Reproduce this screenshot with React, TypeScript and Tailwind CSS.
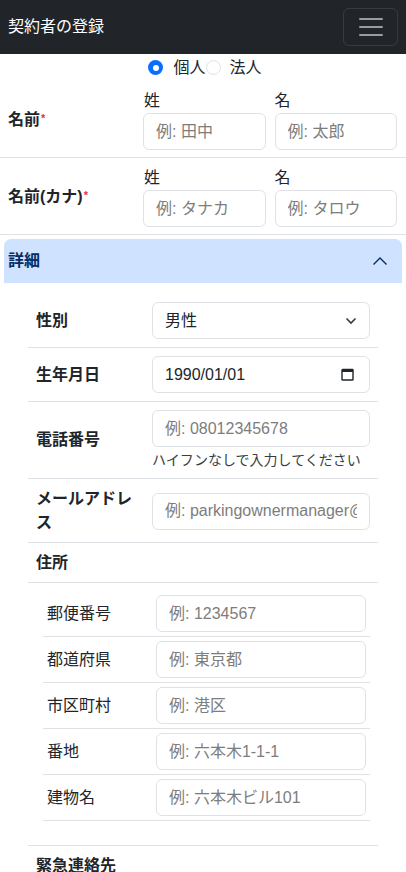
import React from 'react';

const inputCls =
  'h-[37px] w-full min-w-0 rounded-[6px] border border-[#dee2e6] bg-white px-3 text-[16px] leading-[24px] text-[#212529] outline-none placeholder:text-[#7d7d7d]';

function Navbar() {
  return (
    <nav className="flex h-[54px] items-center justify-between bg-[#212529] pl-2 pr-2">
      <span className="text-[16px] leading-[24px] text-white">契約者の登録</span>
      <button className="flex h-[38px] w-[55px] items-center justify-center rounded-[6px] border border-white/10">
        <svg width="30" height="30" viewBox="0 0 30 30" fill="none">
          <path
            d="M4 7h22M4 15h22M4 23h22"
            stroke="rgba(255,255,255,0.55)"
            strokeWidth="2"
            strokeLinecap="round"
            strokeMiterlimit="10"
          />
        </svg>
      </button>
    </nav>
  );
}

function Radio({ checked }: { checked?: boolean }) {
  return checked ? (
    <span className="flex h-[15px] w-[15px] items-center justify-center rounded-full bg-[#0d6efd]">
      <span className="h-[6px] w-[6px] rounded-full bg-white" />
    </span>
  ) : (
    <span className="h-[15px] w-[15px] rounded-full border border-[#dee2e6] bg-white" />
  );
}

function NameRow({
  label,
  first,
  last,
}: {
  label: string;
  first: string;
  last: string;
}) {
  return (
    <div className="grid grid-cols-[127px_1fr] items-center gap-x-2 border-b border-[#dee2e6] pb-[7px] pl-2 pr-[9px] pt-2">
      <div className="text-[16px] font-bold leading-[24px]">
        {label}
        <span className="ml-[1px] align-top text-[11px] leading-[20px] text-[#dc3545]">*</span>
      </div>
      <div className="grid grid-cols-2 gap-x-[9px]">
        <div>
          <div className="pl-[1px] text-[16px] leading-[24px]">姓</div>
          <input className={inputCls} placeholder={first} />
        </div>
        <div>
          <div className="text-[16px] leading-[24px]">名</div>
          <input className={inputCls} placeholder={last} />
        </div>
      </div>
    </div>
  );
}

function DetailRow({
  label,
  tight,
  children,
}: {
  label: string;
  tight?: boolean;
  children: React.ReactNode;
}) {
  return (
    <div
      className={`grid grid-cols-[104px_1fr] items-center gap-x-3 border-b border-[#dee2e6] px-2 pt-2 ${
        tight ? 'pb-[7px]' : 'pb-2'
      }`}
    >
      <div className="text-[16px] font-bold leading-[24px]">{label}</div>
      <div className="min-w-0">{children}</div>
    </div>
  );
}

function AddressRow({ label, placeholder }: { label: string; placeholder: string }) {
  return (
    <div className="grid grid-cols-[109px_1fr] items-center border-b border-[#dee2e6] py-1 pl-1 pr-1">
      <div className="text-[16px] leading-[24px]">{label}</div>
      <input className={inputCls} placeholder={placeholder} />
    </div>
  );
}

export default function App() {
  const address = [
    { label: '郵便番号', placeholder: '例: 1234567' },
    { label: '都道府県', placeholder: '例: 東京都' },
    { label: '市区町村', placeholder: '例: 港区' },
    { label: '番地', placeholder: '例: 六本木1-1-1' },
    { label: '建物名', placeholder: '例: 六本木ビル101' },
  ];

  return (
    <div className="min-h-screen bg-white font-['Liberation_Sans','Noto_Sans_CJK_JP',sans-serif] text-[#212529]">
      <Navbar />

      {/* 個人 / 法人 */}
      <div className="flex h-[27px] items-center justify-center pl-[4px]">
        <Radio checked />
        <span className="ml-[10px] text-[16px] leading-[24px]">個人</span>
        <Radio />
        <span className="ml-[9px] text-[16px] leading-[24px]">法人</span>
      </div>

      <NameRow label="名前" first="例: 田中" last="例: 太郎" />
      <NameRow label="名前(カナ)" first="例: タナカ" last="例: タロウ" />

      {/* Accordion */}
      <div className="mx-1 mt-1">
        <div className="flex h-[44px] items-center justify-between rounded-t-[7px] bg-[#cfe2ff] pl-1 pr-[14px]">
          <span className="text-[16px] font-bold leading-[24px] text-[#052c65]">詳細</span>
          <svg width="16" height="16" viewBox="0 0 16 16" fill="none">
            <path d="M1.5 11.5 8 5l6.5 6.5" stroke="#052c65" strokeWidth="1.4" />
          </svg>
        </div>

        <div className="px-6 pt-[11px]">
          <DetailRow label="性別">
            <div className="relative">
              <select className={`${inputCls} appearance-none pr-9`} defaultValue="male">
                <option value="male">男性</option>
                <option value="female">女性</option>
              </select>
              <svg
                className="pointer-events-none absolute right-[13px] top-[15px]"
                width="12"
                height="8"
                viewBox="0 0 12 8"
                fill="none"
              >
                <path d="M1.5 1.5 6 6l4.5-4.5" stroke="#343a40" strokeWidth="1.6" />
              </svg>
            </div>
          </DetailRow>

          <DetailRow label="生年月日">
            <div className="relative">
              <input className={inputCls} defaultValue="1990/01/01" readOnly />
              <svg
                className="pointer-events-none absolute right-[16px] top-[12px]"
                width="13"
                height="13"
                viewBox="0 0 13 13"
                fill="none"
              >
                <rect x="1" y="1.5" width="11" height="10.5" rx="0.5" stroke="#212529" strokeWidth="1.4" />
                <rect x="1" y="1" width="11" height="3" fill="#212529" />
              </svg>
            </div>
          </DetailRow>

          <div className="grid grid-cols-[104px_1fr] items-center gap-x-3 border-b border-[#dee2e6] px-2 py-2">
            <div className="text-[16px] font-bold leading-[24px]">電話番号</div>
            <div>
              <input className={inputCls} placeholder="例: 08012345678" />
              <div className="mt-1 text-[14px] leading-[19px] text-[#3a3d40]">ハイフンなしで入力してください</div>
            </div>
          </div>

          <DetailRow label="メールアドレス" tight>
            <input className={inputCls} placeholder="例: parkingownermanager@example.com" />
          </DetailRow>

          <div className="border-b border-[#dee2e6] px-2 pb-[7px] pt-2">
            <div className="text-[16px] font-bold leading-[24px]">住所</div>
          </div>

          <div className="border-b border-[#dee2e6] pb-6 pl-[15px] pr-2 pt-2">
            {address.map((a) => (
              <AddressRow key={a.label} label={a.label} placeholder={a.placeholder} />
            ))}
          </div>

          <div className="px-2 pb-[7px] pt-2">
            <div className="text-[16px] font-bold leading-[24px]">緊急連絡先</div>
          </div>
          <div className="pb-6 pl-[15px] pr-2 pt-2">
            <AddressRow label="氏名" placeholder="例: 田中 花子" />
            <AddressRow label="電話番号" placeholder="例: 08012345678" />
            <AddressRow label="続柄" placeholder="例: 配偶者" />
          </div>
        </div>
      </div>
    </div>
  );
}
